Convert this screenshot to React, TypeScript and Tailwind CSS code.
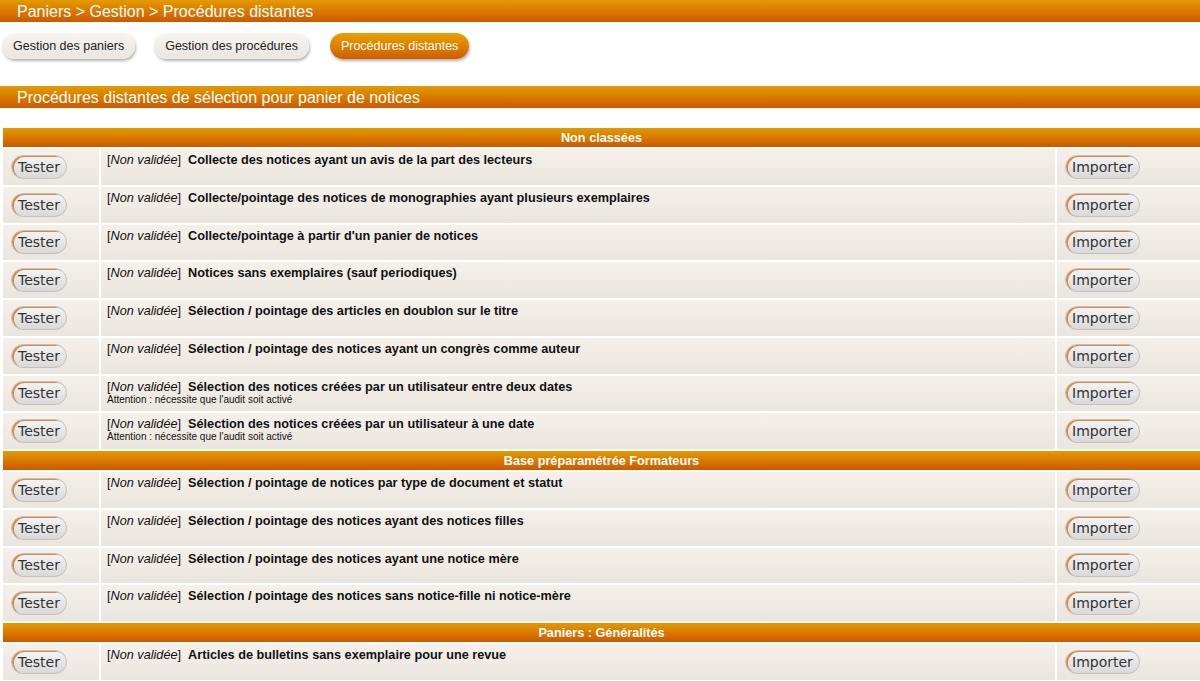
const sections = [
  {
    title: "Non classées",
    rows: [
      { label: "Collecte des notices ayant un avis de la part des lecteurs" },
      { label: "Collecte/pointage des notices de monographies ayant plusieurs exemplaires" },
      { label: "Collecte/pointage à partir d'un panier de notices" },
      { label: "Notices sans exemplaires (sauf periodiques)" },
      { label: "Sélection / pointage des articles en doublon sur le titre" },
      { label: "Sélection / pointage des notices ayant un congrès comme auteur" },
      { label: "Sélection des notices créées par un utilisateur entre deux dates", note: "Attention : nécessite que l'audit soit activé" },
      { label: "Sélection des notices créées par un utilisateur à une date", note: "Attention : nécessite que l'audit soit activé" },
    ],
  },
  {
    title: "Base préparamétrée Formateurs",
    rows: [
      { label: "Sélection / pointage de notices par type de document et statut" },
      { label: "Sélection / pointage des notices ayant des notices filles" },
      { label: "Sélection / pointage des notices ayant une notice mère" },
      { label: "Sélection / pointage des notices sans notice-fille ni notice-mère" },
    ],
  },
  {
    title: "Paniers : Généralités",
    rows: [{ label: "Articles de bulletins sans exemplaire pour une revue" }],
  },
];

const Btn = ({ label }: { label: string }) => (
  <span className="inline-flex h-[24px] items-center rounded-full border border-[#c4c0bc] bg-gradient-to-b from-[#f4f4f4] to-[#d9d9d9] px-[6px] text-[14px] leading-none text-[#333] shadow-[inset_2px_1px_0_#d88a4a] font-['DejaVu_Sans',sans-serif]">
    {label}
  </span>
);

const Tab = ({ label, active }: { label: string; active?: boolean }) => (
  <span
    className={
      active
        ? "inline-flex h-[26px] items-center rounded-full bg-gradient-to-b from-[#e8a200] to-[#cf5c00] px-[11px] text-[12.5px] text-white shadow-[1px_2px_3px_rgba(0,0,0,0.3)]"
        : "inline-flex h-[26px] items-center rounded-full bg-gradient-to-b from-[#f7f4f0] to-[#ebe5df] px-[11px] text-[12.5px] text-[#222] shadow-[1px_2px_3px_rgba(0,0,0,0.3)]"
    }
  >
    {label}
  </span>
);

export default function App() {
  return (
    <div className="min-h-[681px] bg-white font-['Liberation_Sans',Arial,sans-serif]">
      <div className="h-[22px] bg-gradient-to-b from-[#e39a00] to-[#cd5800] pl-[17px] text-[16px] leading-[23px] text-white">
        Paniers &gt; Gestion &gt; Procédures distantes
      </div>
      <div className="flex h-[64px] items-start gap-[19px] pl-[2px] pt-[11px]">
        <Tab label="Gestion des paniers" />
        <Tab label="Gestion des procédures" />
        <span className="ml-[2px]">
          <Tab label="Procédures distantes" active />
        </span>
      </div>
      <div className="h-[22px] bg-gradient-to-b from-[#e39a00] to-[#cd5800] pl-[17px] text-[16px] leading-[23px] text-white">
        Procédures distantes de sélection pour panier de notices
      </div>
      <div className="pl-px pt-[18px]">
        <table className="w-[1201px] border-separate border-spacing-[2px] text-[12.7px]">
          <tbody>
            {sections.map((s) => (
              <>
                <tr key={s.title}>
                  <th
                    colSpan={3}
                    className="h-[19px] bg-gradient-to-b from-[#e39a00] to-[#cd5800] p-0 pt-px text-center text-[12.7px] font-bold leading-[18px] text-white"
                  >
                    {s.title}
                  </th>
                </tr>
                {s.rows.map((r) => (
                  <tr key={r.label} className="h-[35.75px]">
                    <td className="w-[96px] bg-gradient-to-b from-[#f5f0ea] to-[#ebe5e0] py-0 pl-[8px] align-middle">
                      <Btn label="Tester" />
                    </td>
                    <td className="bg-gradient-to-b from-[#f5f0ea] to-[#ebe5e0] px-[6px] pt-[4px] align-top leading-[14px] text-[#111]">
                      <div>
                        [<i>Non validée</i>]<b className="ml-[7px]">{r.label}</b>
                      </div>
                      {r.note && <div className="text-[10px] leading-[12px]">{r.note}</div>}
                    </td>
                    <td className="w-[143px] bg-gradient-to-b from-[#f5f0ea] to-[#ebe5e0] py-0 pl-[8px] align-middle">
                      <Btn label="Importer" />
                    </td>
                  </tr>
                ))}
              </>
            ))}
          </tbody>
        </table>
      </div>
    </div>
  );
}
